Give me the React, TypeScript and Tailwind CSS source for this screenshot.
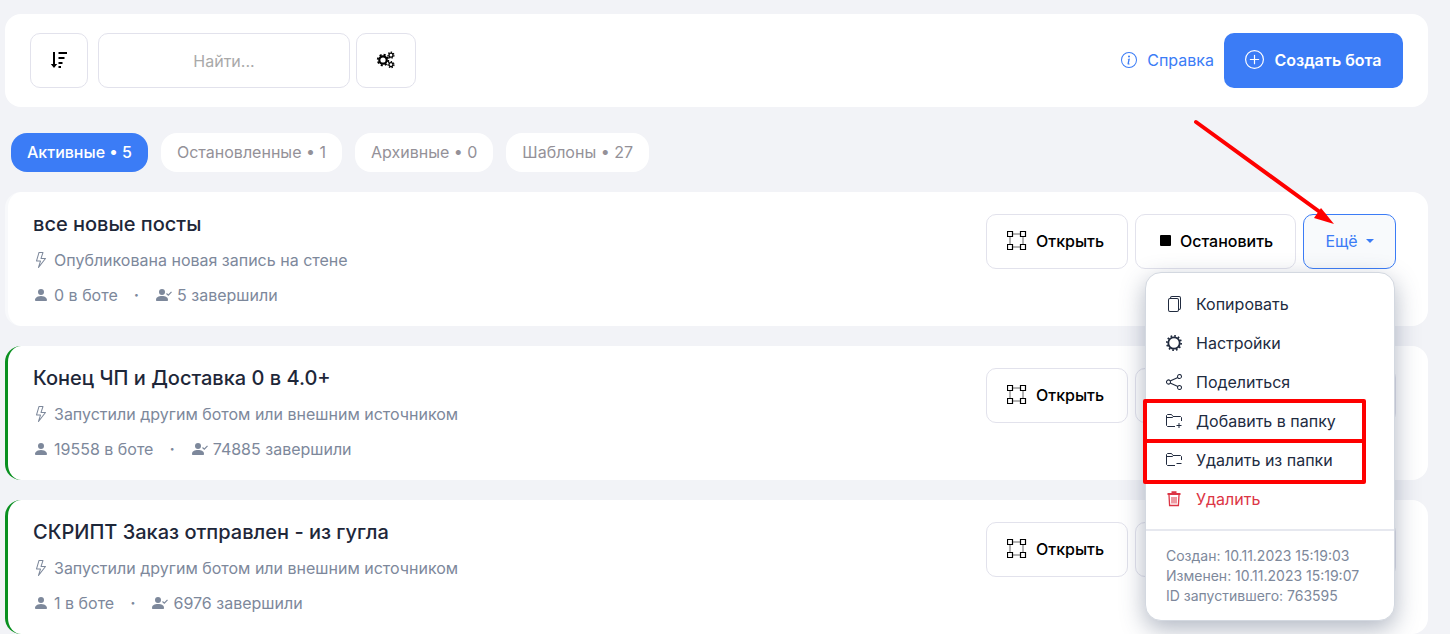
import { useState } from "react";
import type { ReactNode } from "react";
import clsx from "clsx";
import {
  BsFiles,
  BsInfoCircle,
  BsLightning,
  BsPersonFill,
  BsPlusCircle,
  BsShare,
} from "react-icons/bs";

interface Bot {
  title: string;
  trigger: string;
  inBot: number;
  finished: number;
  marked: boolean;
}

const TABS = [
  { label: "Активные", count: 5 },
  { label: "Остановленные", count: 1 },
  { label: "Архивные", count: 0 },
  { label: "Шаблоны", count: 27 },
];

const BOTS: Bot[] = [
  {
    title: "все новые посты",
    trigger: "Опубликована новая запись на стене",
    inBot: 0,
    finished: 5,
    marked: false,
  },
  {
    title: "Конец ЧП и Доставка 0 в 4.0+",
    trigger: "Запустили другим ботом или внешним источником",
    inBot: 19558,
    finished: 74885,
    marked: true,
  },
  {
    title: "СКРИПТ Заказ отправлен - из гугла",
    trigger: "Запустили другим ботом или внешним источником",
    inBot: 1,
    finished: 6976,
    marked: true,
  },
];

function SortIcon() {
  return (
    <svg width="18" height="18" viewBox="0 0 18 18" fill="currentColor">
      <path d="M3 1h2v12h2.200L4 17 .8 13H3z" />
      <path d="M8.500 1H17v2H8.500zM8.500 6H14.500v2H8.500zM8.500 11H12.500v2H8.500zM8.500 15H11v2H8.500z" />
    </svg>
  );
}

function GearsIcon() {
  return (
    <svg width="20" height="18" viewBox="0 0 20 18" fill="none" stroke="currentColor">
      <circle cx="7" cy="9" r="3.700" strokeWidth="2.200" />
      <circle cx="7" cy="9" r="5.300" strokeWidth="1.800" strokeDasharray="2.080 2.080" />
      <circle cx="15" cy="4.200" r="2" strokeWidth="1.300" />
      <circle cx="15" cy="4.200" r="3" strokeWidth="1.200" strokeDasharray="1.350 1.350" />
      <circle cx="15" cy="13.600" r="2" strokeWidth="1.300" />
      <circle cx="15" cy="13.600" r="3" strokeWidth="1.200" strokeDasharray="1.350 1.350" />
    </svg>
  );
}

function NodesIcon() {
  return (
    <svg width="20" height="20" viewBox="0 0 20 20" fill="none" stroke="currentColor">
      <path d="M.5 .5h5v5h-5zM13.500 .5h5v5h-5zM.5 13.500h5v5h-5zM13.500 13.500h5v5h-5z" strokeWidth="1.200" />
      <path d="M5.500 3h8M5.500 16h8M3 5.500v8M16 5.500v8" strokeOpacity="0.6" />
    </svg>
  );
}

function UserCheckIcon() {
  return (
    <svg width="17" height="16" viewBox="0 0 17 16" fill="currentColor">
      <circle cx="7" cy="5" r="3" />
      <path d="M1 13c0-3 2.500-4 6-4s6 1 6 4c0 .7-.4 1-1 1H2c-.6 0-1-.3-1-1z" />
      <path d="M11.500 6.500 13.300 8.200 16.500 4.800" fill="none" stroke="currentColor" strokeWidth="1.200" />
    </svg>
  );
}

function GearIcon() {
  return (
    <svg width="16" height="16" viewBox="0 0 16 16" fill="none" stroke="currentColor">
      <circle cx="8" cy="8" r="5.700" strokeWidth="1.800" />
      <circle cx="8" cy="8" r="7.100" strokeWidth="1.800" strokeDasharray="1.700 2.017" />
    </svg>
  );
}

function FolderIcon({ plus }: { plus?: boolean }) {
  return (
    <svg width="16" height="16" viewBox="0 0 16 16" fill="none" stroke="currentColor">
      <path d="M9 13.500H1.500l-1-1v-10l1-1h4l1.500 2h7.500l1 1v3.500M.5 4.500h6l1-1" />
      <path d={plus ? "M10.500 12.500h5M13 10v5" : "M10.500 11.500h5"} />
    </svg>
  );
}

function TrashIcon() {
  return (
    <svg width="16" height="16" viewBox="0 0 16 16" fill="none" stroke="currentColor">
      <path d="M1.500 3h13M5.500 1.300h5" strokeWidth="2" />
      <path d="M3 4l.6 10.500h8.800L13 4" strokeWidth="1.300" />
      <path d="M6 6v6.500M8 6v6.500M10 6v6.500" />
    </svg>
  );
}

function ActionButton({ children, className }: { children: ReactNode; className: string }) {
  return (
    <button
      type="button"
      className={clsx(
        "flex h-[55px] items-center rounded-[10px] border border-[#e2e2ec] bg-white pb-0.5 pl-5 font-medium text-black",
        className
      )}
    >
      {children}
    </button>
  );
}

function MenuItem({
  icon,
  children,
  danger,
}: {
  icon: ReactNode;
  children: ReactNode;
  danger?: boolean;
}) {
  return (
    <button
      type="button"
      role="menuitem"
      className={clsx(
        "flex h-[39px] w-full items-center gap-3.5 px-5 text-left",
        danger ? "text-[#dc3545]" : "text-[#212b3f]"
      )}
    >
      {icon}
      {children}
    </button>
  );
}

function MoreMenu() {
  return (
    <div
      role="menu"
      className="absolute top-[58px] right-px z-10 w-[250px] rounded-2xl border border-[#d3d8e0] bg-white pt-[11px] pb-[14px] shadow-[0_8px_24px_rgba(60,75,105,0.4)]"
    >
      <MenuItem icon={<BsFiles size={16} />}>Копировать</MenuItem>
      <MenuItem icon={<GearIcon />}>Настройки</MenuItem>
      <MenuItem icon={<BsShare size={16} />}>Поделиться</MenuItem>
      <div className="relative">
        <MenuItem icon={<FolderIcon plus />}>Добавить в папку</MenuItem>
        <MenuItem icon={<FolderIcon />}>Удалить из папки</MenuItem>
        <div className="pointer-events-none absolute -top-0.5 -bottom-[5px] -left-[3px] flex w-[223px] flex-col rounded-[2px] border-4 border-[#fe0000]">
          <div className="h-10 border-b-4 border-[#fe0000]" />
        </div>
      </div>
      <MenuItem icon={<TrashIcon />} danger>
        Удалить
      </MenuItem>
      <div className="mt-[11px] border-t-2 border-[#e6e8ef] px-5 pt-[15px] text-sm leading-5 text-[#7d889b]">
        <p>Создан: 10.11.2023 15:19:03</p>
        <p>Изменен: 10.11.2023 15:19:07</p>
        <p>ID запустившего: 763595</p>
      </div>
    </div>
  );
}

function BotCard({ bot, open, onToggle }: { bot: Bot; open: boolean; onToggle: () => void }) {
  return (
    <article
      className={clsx(
        "flex items-start justify-between rounded-2xl border-l-[3px] bg-white pr-8 pl-[25px]",
        bot.marked ? "border-[#0a9020]" : "border-[#f8f9fb]"
      )}
    >
      <div className="flex flex-col gap-[11px] py-[19px] leading-6 text-[#7d889b]">
        <h2 className="text-xl leading-[26px] font-medium text-[#1e2739]">{bot.title}</h2>
        <p className="flex items-center gap-[5px]">
          <BsLightning size={16} />
          {bot.trigger}
        </p>
        <p className="flex items-center gap-[5px]">
          <BsPersonFill size={16} />
          {bot.inBot} в боте
          <span className="px-[11px] font-bold">·</span>
          <UserCheckIcon />
          {bot.finished} завершили
        </p>
      </div>
      <div className="flex gap-[7px] pt-[22px]">
        <ActionButton className="w-[142px]">
          <NodesIcon />
          <span className="ml-[9px]">Открыть</span>
        </ActionButton>
        <ActionButton className="w-[161px]">
          <span className="mx-1 size-[11px] rounded-[1px] bg-black" />
          <span className="ml-[5px]">Остановить</span>
        </ActionButton>
        <div className="relative">
          <button
            type="button"
            aria-expanded={open}
            onClick={onToggle}
            className={clsx(
              "flex h-[55px] w-[93px] items-center justify-center gap-2 rounded-[10px] border pb-0.5",
              open
                ? "border-[#3b7cf6] bg-[#f8fafc] text-[#3b7cf6]"
                : "border-[#e2e2ec] bg-white text-black"
            )}
          >
            Ещё
            <svg width="8" height="4" viewBox="0 0 8 4" fill="currentColor">
              <path d="M0 0h8L4 4z" />
            </svg>
          </button>
          {open && <MoreMenu />}
          {open && (
            <svg
              className="pointer-events-none absolute right-[60px] bottom-[43px] z-20"
              width="144"
              height="108"
              viewBox="0 0 144 108"
            >
              <path d="M4 4 132 97" stroke="#fe0000" strokeWidth="4" strokeLinecap="round" />
              <path d="M142 106 122 100 129 90z" fill="#fe0000" />
            </svg>
          )}
        </div>
      </div>
    </article>
  );
}

export default function App() {
  const [tab, setTab] = useState(0);
  const [openMenu, setOpenMenu] = useState<number | null>(0);

  return (
    <main className="min-h-screen bg-[#f2f3f7] pt-3.5 pr-[22px] pl-[5px] font-['Inter',sans-serif] text-base">
      <header className="flex items-center justify-between rounded-2xl bg-white px-[25px] py-[19px]">
        <div className="flex">
          <button
            type="button"
            aria-label="Сортировка"
            className="flex h-[55px] w-[58px] items-center justify-center rounded-[10px] border border-[#e2e2ec] pb-0.5"
          >
            <SortIcon />
          </button>
          <input
            type="text"
            aria-label="Найти"
            placeholder="Найти..."
            className="ml-2.5 h-[55px] w-[252px] rounded-[10px] border border-[#e2e2ec] text-center placeholder:text-[#a9a9a9] focus:outline-none"
          />
          <button
            type="button"
            aria-label="Параметры"
            className="ml-1.5 flex h-[55px] w-[60px] items-center justify-center rounded-[10px] border border-[#e2e2ec] pb-0.5"
          >
            <GearsIcon />
          </button>
        </div>
        <div className="flex items-center gap-2.5">
          <a href="#help" className="flex items-center gap-2.5 pb-0.5 text-[#3b7cf6]">
            <BsInfoCircle size={16} />
            Справка
          </a>
          <button
            type="button"
            className="flex h-[55px] w-[179px] items-center justify-center gap-2.5 rounded-[10px] bg-[#3b7cf6] pb-0.5 font-semibold text-white"
          >
            <BsPlusCircle size={19} />
            Создать бота
          </button>
        </div>
      </header>

      <nav className="mt-[26px] flex gap-[13px] pl-1.5">
        {TABS.map((t, i) => (
          <button
            key={t.label}
            type="button"
            onClick={() => setTab(i)}
            className={clsx(
              "h-[39px] rounded-2xl px-4 pb-0.5",
              i === tab ? "bg-[#3b7cf6] font-medium text-white" : "bg-white text-[#949198]"
            )}
          >
            {t.label} • {t.count}
          </button>
        ))}
      </nav>

      <section className="mt-5 flex flex-col gap-5">
        {BOTS.map((bot, i) => (
          <BotCard
            key={bot.title}
            bot={bot}
            open={openMenu === i}
            onToggle={() => setOpenMenu(openMenu === i ? null : i)}
          />
        ))}
      </section>
    </main>
  );
}
